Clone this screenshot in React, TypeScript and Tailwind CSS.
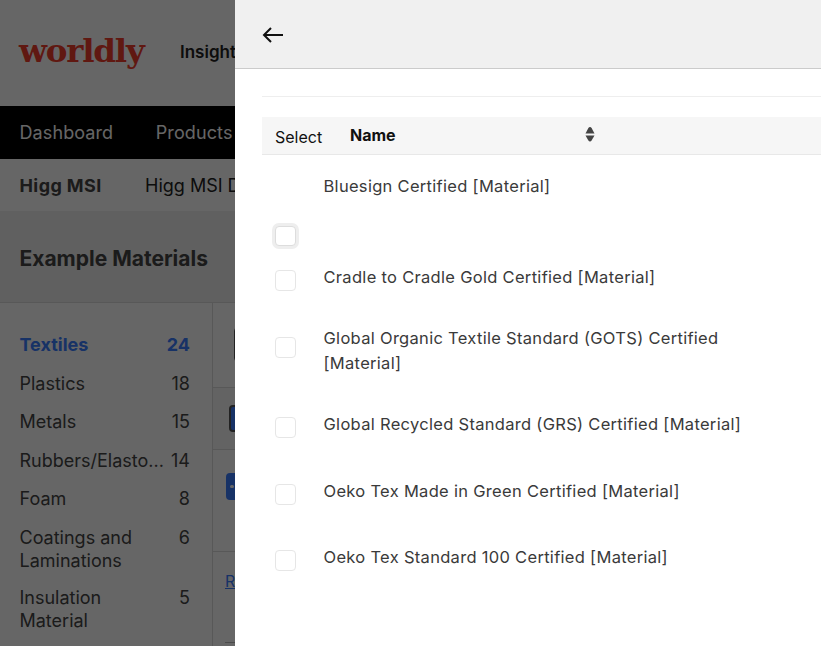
import React from "react";

const font = { fontFamily: "Inter, 'Liberation Sans', sans-serif" };

const side: [string, string][] = [
  ["Plastics", "18"],
  ["Metals", "15"],
  ["Rubbers/Elasto...", "14"],
  ["Foam", "8"],
  ["Coatings and Laminations", "6"],
];

function Box({ className = "" }: { className?: string }) {
  return <div className={`h-[21px] w-[21px] shrink-0 rounded-[4px] border border-[#e6e6e6] bg-white ${className}`} />;
}

function Row({ h, mt, label }: { h: string; mt: string; label: string }) {
  return (
    <div className={`flex items-start pl-[13px] ${h}`}>
      <Box className={mt} />
      <div className="ml-[27.5px] max-w-[425px] text-[16.5px] leading-[25px] tracking-[0.3px] text-[#3a3a3a]">{label}</div>
    </div>
  );
}

export default function App() {
  return (
    <div className="relative h-[646px] w-[821px] overflow-hidden bg-white" style={font}>
      {/* page underneath */}
      <div className="flex h-full flex-col">
        <div className="flex h-[106px] shrink-0 items-center pl-[19px]">
          <span className="mb-[4px] w-[161px] text-[32.5px] font-bold leading-none tracking-[-1.2px] text-[#f03c2c]" style={{ fontFamily: "'DejaVu Serif', serif" }}>
            worldly
          </span>
          <span className="text-[17px] font-semibold text-[#222]">Insights</span>
        </div>
        <div className="flex h-[53px] shrink-0 items-center gap-[42.5px] bg-black pl-[19.5px] text-[18px] tracking-[0.1px] text-white">
          <span>Dashboard</span>
          <span>Products</span>
        </div>
        <div className="flex h-[52px] shrink-0 items-center pl-[19.5px] text-[18px] text-[#222]">
          <span className="w-[125.5px] font-bold tracking-[0.4px] text-[#444]">Higg MSI</span>
          <span>Higg MSI Data</span>
        </div>
        <div className="flex h-[92px] shrink-0 items-center border-b border-[#dcdcdc] bg-[#f0f0f0] pl-[19.5px] pt-[5px] text-[21px] font-bold text-[#444]">
          Example Materials
        </div>
        <div className="flex min-h-0 flex-1">
          <div className="flex w-[213px] shrink-0 flex-col gap-[15.45px] border-r border-[#dcdcdc] pl-[19.5px] pr-[22px] pt-[30.4px] text-[18px] leading-[23px] text-[#444]">
            <div className="flex justify-between font-bold text-[#3b7dff]">
              <span>Textiles</span>
              <span>24</span>
            </div>
            {side.map(([a, b]) => (
              <div key={a} className="flex justify-between">
                <span className="max-w-[140px]">{a}</span>
                <span>{b}</span>
              </div>
            ))}
            <div className="-mt-px flex justify-between">
              <span className="max-w-[140px]">Insulation Material</span>
              <span>5</span>
            </div>
          </div>
          <div className="flex-1">
            <div className="h-[84px] pl-[21px] pt-[24px]">
              <div className="h-[35px] w-10 rounded border border-[#555] bg-white" />
            </div>
            <div className="flex h-[63px] items-center border-y border-[#dcdcdc] bg-[#f7f7f7] pl-[16px]">
              <div className="h-[27px] w-10 rounded border-2 border-[#555] bg-[#3b7dff]" />
            </div>
            <div className="h-[102px] border-b border-[#dcdcdc] pl-[13px] pt-[23px]">
              <div className="flex h-[27px] w-10 items-center rounded-[4px] bg-[#3b7dff] pl-[4px]">
                <div className="h-[3px] w-[4px] rounded-sm bg-white" />
              </div>
            </div>
            <div className="pl-3 pt-[17px] text-[16px] text-[#3b7dff] underline">Read</div>
            <div className="ml-3 mt-[49px] border-t border-[#bbb]" />
          </div>
        </div>
      </div>

      {/* backdrop */}
      <div className="absolute inset-0 bg-black/60" />

      {/* drawer */}
      <div className="absolute inset-y-0 left-[235px] right-0 flex flex-col bg-white">
        <div className="flex h-[69px] shrink-0 items-center border-b border-[#cbcbcb] bg-[#f0f0f0] pl-[27px]">
          <svg width="22" height="18" viewBox="0 0 22 18" fill="none" stroke="#111" strokeWidth="2" className="mt-[1px]">
            <path d="M21 9H2" />
            <path d="M9 2L2 9l7 7" />
          </svg>
        </div>
        <div className="flex-1 pl-[27px]">
          <div className="mt-[27px] border-t border-[#eeeeee]" />
          <div className="mt-5 flex h-[38px] items-center border-b border-[#e8e8e8] bg-[#f6f6f6] text-[#111]">
            <span className="ml-[13px] mt-[2px] w-[75px] text-[16px]">Select</span>
            <span className="mb-[2px] w-[235px] text-[16px] font-bold">Name</span>
            <svg width="10" height="17" viewBox="0 0 10 17" fill="#444" className="mb-[2px]">
              <path d="M5 1q1 0 1.6 1L9.5 7.5h-9L3.4 2Q4 1 5 1z" />
              <path d="M5 15.5q1 0 1.6-1l2.9-5h-9l2.9 5q.6 1 1.6 1z" />
            </svg>
          </div>
          <div className="flex h-[110px] items-start pl-[10px] pt-[19px]">
            <div className="mt-[49px] rounded-[7px] bg-[#eeeeee] p-[3px]">
              <Box className="!h-[20px] !w-[21px] !border-[#dddddd]" />
            </div>
            <div className="ml-[24.5px] text-[16.5px] leading-[25px] tracking-[0.3px] text-[#3a3a3a]">Bluesign Certified [Material]</div>
          </div>
          <Row h="h-[61px]" mt="mt-[5px]" label="Cradle to Cradle Gold Certified [Material]" />
          <Row h="h-[86px]" mt="mt-[11px]" label="Global Organic Textile Standard (GOTS) Certified [Material]" />
          <Row h="h-[67px]" mt="mt-[5px]" label="Global Recycled Standard (GRS) Certified [Material]" />
          <Row h="h-[66px]" mt="mt-[5px]" label="Oeko Tex Made in Green Certified [Material]" />
          <Row h="h-[60px]" mt="mt-[5px]" label="Oeko Tex Standard 100 Certified [Material]" />
        </div>
      </div>
    </div>
  );
}
